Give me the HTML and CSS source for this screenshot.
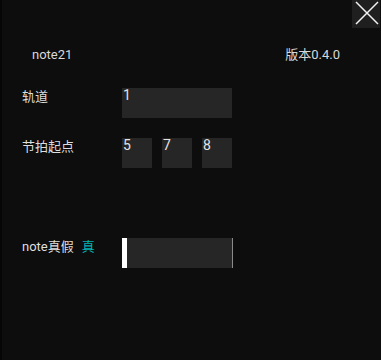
FILE: index.html
```html
<!DOCTYPE html>
<html lang="zh">
<head>
<meta charset="utf-8">
<title>note21</title>
<link rel="stylesheet" href="styles.css">
</head>
<body>
<div class="app">
  <div class="topbar">
    <button class="close" aria-label="关闭">
      <svg width="28" height="28" viewBox="0 0 28 28"><path d="M4 2 L26 24 M26 2 L4 24" stroke="#f2f2f2" stroke-width="1.5" fill="none"/></svg>
    </button>
  </div>
  <div class="header">
    <span class="title">note21</span>
    <span class="version">版本0.4.0</span>
  </div>
  <div class="row row-track">
    <span class="label">轨道</span>
    <div class="field wide">1</div>
  </div>
  <div class="row row-beat">
    <span class="label">节拍起点</span>
    <div class="beats">
      <div class="field small">5</div>
      <div class="field small">7</div>
      <div class="field small">8</div>
    </div>
  </div>
  <div class="row row-bool">
    <span class="label">note真假<span class="flag">真</span></span>
    <div class="toggle"></div>
  </div>
</div>
</body>
</html>
```

FILE: styles.css
```css
html, body {
  margin: 0;
  padding: 0;
  background: #0d0d0d;
}
.app {
  min-height: 360px;
  background: #0d0d0d;
  box-shadow: inset 2px 0 0 #060606;
  font-family: Roboto, "Noto Sans CJK SC", sans-serif;
  font-size: 13px;
  line-height: 18px;
  color: #dedede;
}
.topbar {
  display: flex;
  justify-content: flex-end;
  padding-right: 1px;
  height: 28px;
}
.close {
  width: 28px;
  height: 28px;
  padding: 0;
  margin: 0;
  border: 0;
  background: #1f1f1f;
  display: block;
}
.close svg { display: block; }
.header {
  display: flex;
  justify-content: space-between;
  margin-top: 18px;
  padding: 0 41px 0 32px;
  height: 18px;
  color: #d8d8d8;
}
.row {
  display: flex;
  align-items: flex-start;
  padding-left: 22px;
}
.row-track { margin-top: 24px; }
.row-beat { margin-top: 20px; }
.row-bool { margin-top: 70px; }
.label {
  width: 100px;
  flex: none;
  white-space: nowrap;
}
.flag {
  color: #00b2b2;
  margin-left: 8px;
}
.field {
  background: #262626;
  height: 30px;
  font-size: 14px;
  line-height: 15px;
  padding: 0 1px;
  box-sizing: border-box;
  color: #e4e4e4;
}
.wide { width: 110px; }
.beats {
  display: flex;
  gap: 10px;
}
.small { width: 30px; }
.toggle {
  width: 105px;
  height: 30px;
  background: #262626;
  border-left: 5px solid #ffffff;
  border-right: 1px solid #8a8a8a;
}
```
